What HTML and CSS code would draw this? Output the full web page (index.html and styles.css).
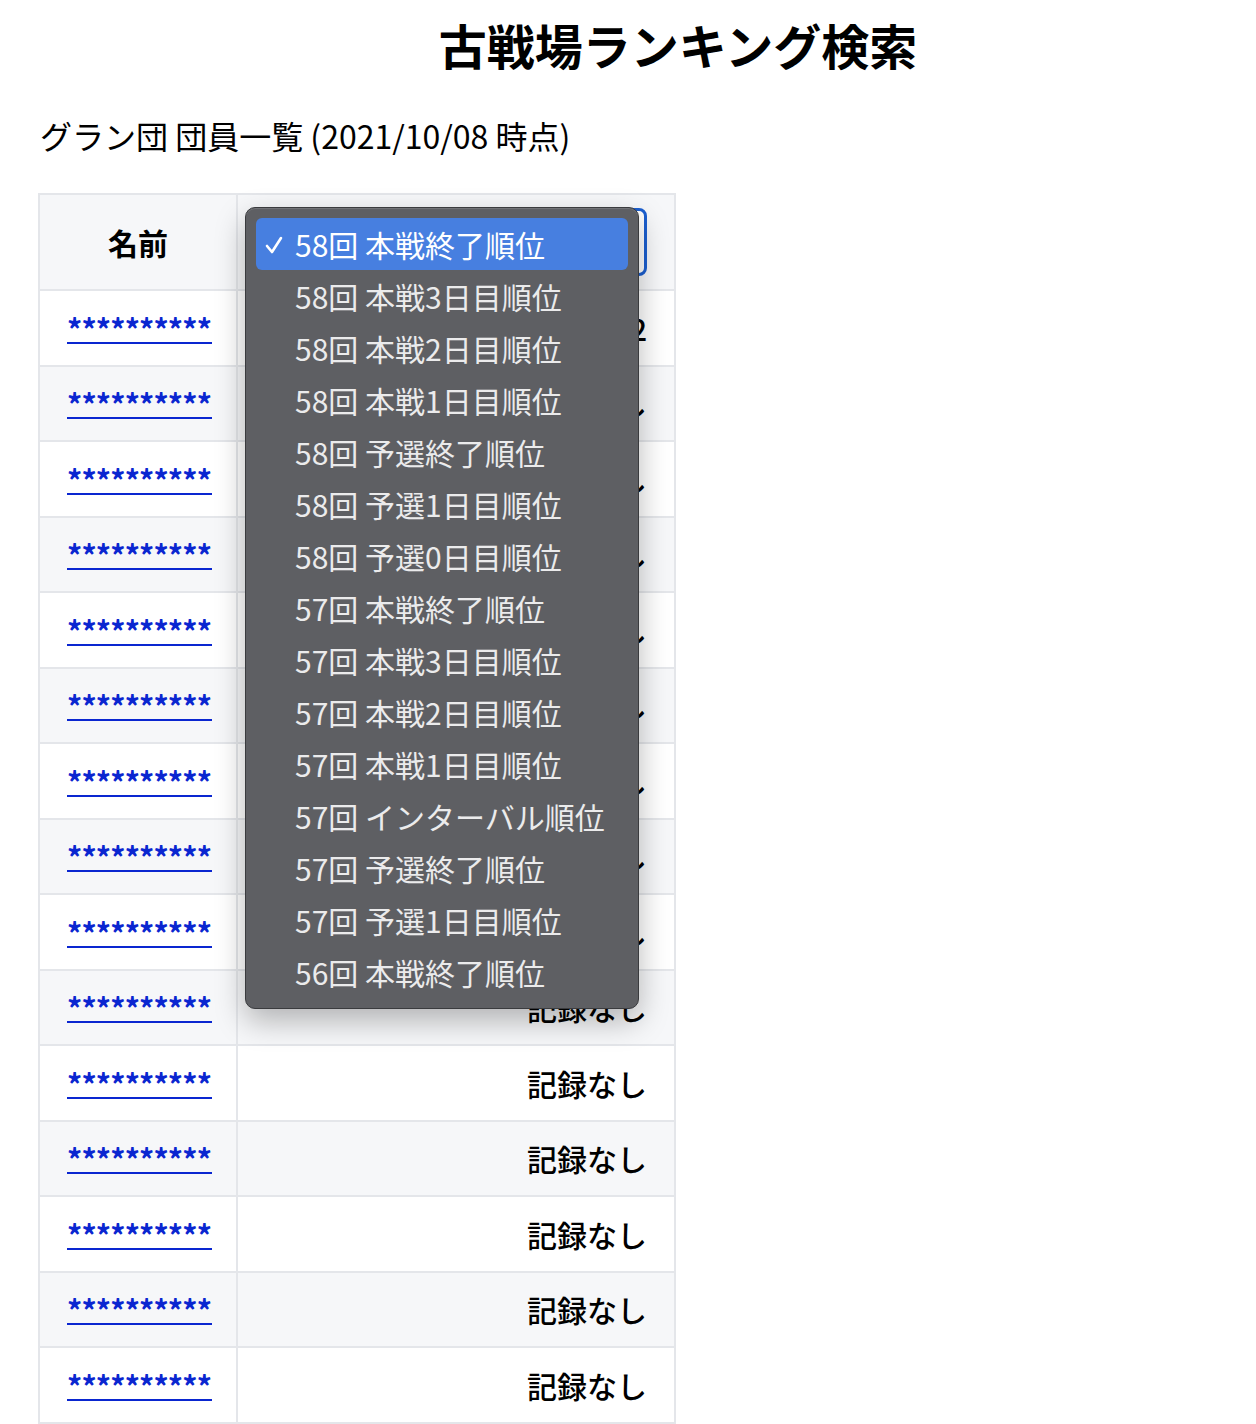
FILE: index.html
```html
<!DOCTYPE html>
<html lang="ja">
<head>
<meta charset="utf-8">
<title>古戦場ランキング検索</title>
<link rel="stylesheet" href="styles.css">
</head>
<body>
<div class="page">
  <h1 class="title">古戦場ランキング検索</h1>
  <p class="subtitle">グラン団 団員一覧 (2021/10/08 時点)</p>
  <div class="table-wrap">
    <table class="members">
      <thead>
        <tr>
          <th class="col-name">名前</th>
          <th class="col-rank">
            <div class="select-box">
              <span class="select-value">58回 本戦終了順位</span>
            </div>
          </th>
        </tr>
      </thead>
      <tbody>
        <tr><td class="col-name"><a class="name-link" href="#">**********</a></td><td class="col-rank">1,832</td></tr>
        <tr><td class="col-name"><a class="name-link" href="#">**********</a></td><td class="col-rank">記録なし</td></tr>
        <tr><td class="col-name"><a class="name-link" href="#">**********</a></td><td class="col-rank">記録なし</td></tr>
        <tr><td class="col-name"><a class="name-link" href="#">**********</a></td><td class="col-rank">記録なし</td></tr>
        <tr><td class="col-name"><a class="name-link" href="#">**********</a></td><td class="col-rank">記録なし</td></tr>
        <tr><td class="col-name"><a class="name-link" href="#">**********</a></td><td class="col-rank">記録なし</td></tr>
        <tr><td class="col-name"><a class="name-link" href="#">**********</a></td><td class="col-rank">記録なし</td></tr>
        <tr><td class="col-name"><a class="name-link" href="#">**********</a></td><td class="col-rank">記録なし</td></tr>
        <tr><td class="col-name"><a class="name-link" href="#">**********</a></td><td class="col-rank">記録なし</td></tr>
        <tr><td class="col-name"><a class="name-link" href="#">**********</a></td><td class="col-rank">記録なし</td></tr>
        <tr><td class="col-name"><a class="name-link" href="#">**********</a></td><td class="col-rank">記録なし</td></tr>
        <tr><td class="col-name"><a class="name-link" href="#">**********</a></td><td class="col-rank">記録なし</td></tr>
        <tr><td class="col-name"><a class="name-link" href="#">**********</a></td><td class="col-rank">記録なし</td></tr>
        <tr><td class="col-name"><a class="name-link" href="#">**********</a></td><td class="col-rank">記録なし</td></tr>
        <tr><td class="col-name"><a class="name-link" href="#">**********</a></td><td class="col-rank">記録なし</td></tr>
        <tr><td class="col-name"><a class="name-link" href="#">**********</a></td><td class="col-rank">記録なし</td></tr>
      </tbody>
    </table>

    <ul class="popup-menu">
      <li class="menu-item selected"><svg class="check" width="20" height="20" viewBox="0 0 20 20"><path d="M3 11 L8 17 L17 3" fill="none" stroke="#ffffff" stroke-width="2.6" stroke-linecap="round" stroke-linejoin="round"/></svg>58回 本戦終了順位</li>
      <li class="menu-item">58回 本戦3日目順位</li>
      <li class="menu-item">58回 本戦2日目順位</li>
      <li class="menu-item">58回 本戦1日目順位</li>
      <li class="menu-item">58回 予選終了順位</li>
      <li class="menu-item">58回 予選1日目順位</li>
      <li class="menu-item">58回 予選0日目順位</li>
      <li class="menu-item">57回 本戦終了順位</li>
      <li class="menu-item">57回 本戦3日目順位</li>
      <li class="menu-item">57回 本戦2日目順位</li>
      <li class="menu-item">57回 本戦1日目順位</li>
      <li class="menu-item">57回 インターバル順位</li>
      <li class="menu-item">57回 予選終了順位</li>
      <li class="menu-item">57回 予選1日目順位</li>
      <li class="menu-item">56回 本戦終了順位</li>
    </ul>
  </div>
</div>
</body>
</html>
```

FILE: styles.css
```css
html, body {
  margin: 0;
  padding: 0;
  background: #ffffff;
}

body {
  font-family: "Noto Sans CJK JP", "Noto Sans", sans-serif;
  color: #000000;
}

.page {
  padding: 0 0 0 38px;
}

.title {
  margin: 0;
  padding: 12px 0 0 62px;
  text-align: center;
  font-size: 48px;
  line-height: 64px;
  font-weight: 700;
}

.subtitle {
  margin: 0;
  padding: 0 0 0 2px;
  margin-top: 39px;
  font-size: 32px;
  line-height: 40px;
  font-weight: 400;
}

.table-wrap {
  position: relative;
  margin-top: 38px;
  width: 638px;
}

.members {
  border-collapse: collapse;
  width: 638px;
  table-layout: fixed;
}

.members th,
.members td {
  border: 2px solid #e4e6ea;
  padding: 0 27px;
  font-size: 30px;
}

.members th {
  height: 94px;
  background: #f6f7f9;
  font-weight: 700;
}

.members td {
  height: 73.5px;
}

.members tbody tr:nth-child(odd) td {
  background: #ffffff;
}

.members tbody tr:nth-child(even) td {
  background: #f6f7f9;
}

.col-name {
  width: 142px;
  text-align: center;
}

.members td.col-rank {
  text-align: right;
  font-weight: 500;
}

.name-link {
  display: inline-block;
  color: #0a26d0;
  text-decoration: none;
  font-size: 30px;
  font-weight: 700;
  line-height: 28px;
  letter-spacing: -0.8px;
  padding-right: 0.8px;
  border-bottom: 2px solid #0a26d0;
  padding-bottom: 0;
  margin-top: 4px;
}

.select-box {
  height: 62px;
  border: 3px solid #1b5fd0;
  border-radius: 8px;
  background: #ffffff;
  display: flex;
  align-items: center;
  padding-left: 20px;
  font-weight: 400;
  text-align: left;
}

.select-value {
  font-size: 30px;
}

.popup-menu {
  position: absolute;
  left: 207px;
  top: 14px;
  width: 394px;
  margin: 0;
  padding: 10px 10px;
  box-sizing: border-box;
  list-style: none;
  background: #5e5f63;
  border: 1px solid #3a3b3e;
  border-radius: 10px;
  box-shadow: 0 12px 30px rgba(0, 0, 0, 0.28), inset 0 1px 0 rgba(255, 255, 255, 0.12);
}

.menu-item {
  position: relative;
  height: 52px;
  line-height: 52px;
  padding-left: 39px;
  font-size: 30px;
  color: #ebebec;
  border-radius: 6px;
  white-space: nowrap;
}

.menu-item.selected {
  background: #477fe0;
  color: #ffffff;
}

.check {
  position: absolute;
  left: 8px;
  top: 17px;
}
```
